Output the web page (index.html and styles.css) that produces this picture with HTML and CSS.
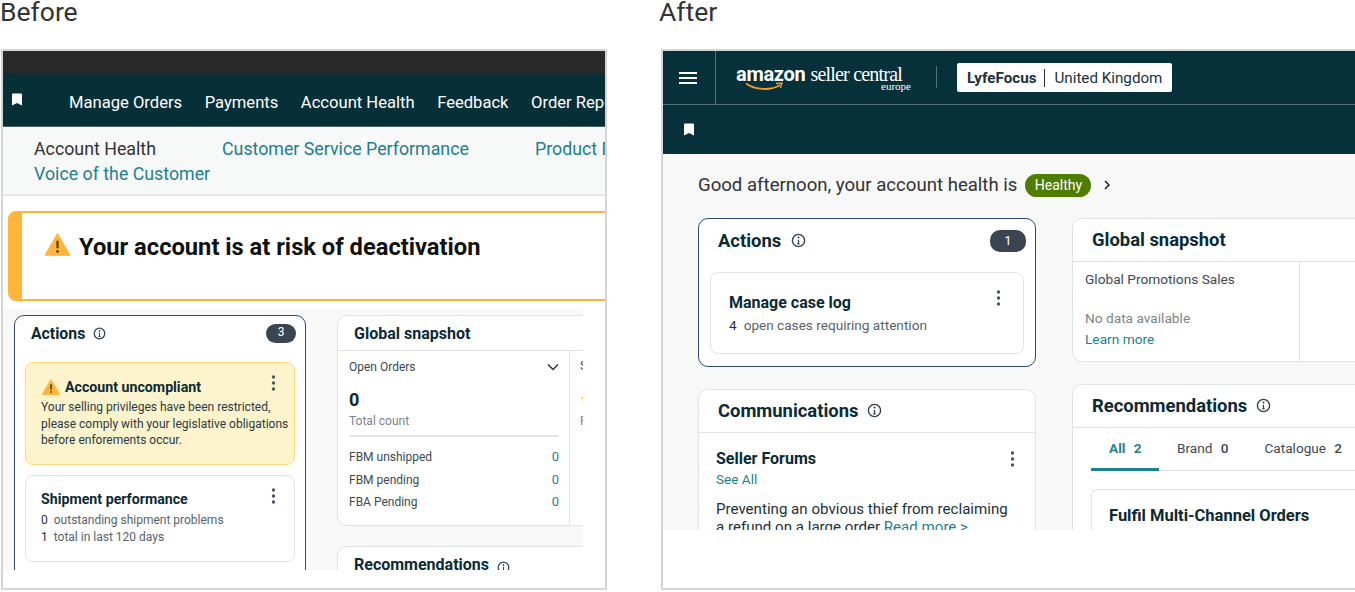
FILE: index.html
```html
<!DOCTYPE html>
<html lang="en">
<head>
    <meta charset="UTF-8">
    <title>Before and After</title>
    <link rel="stylesheet" href="styles.css">
</head>
<body>
<svg class="sprites" width="0" height="0">
    <symbol id="bookmark" viewBox="0 0 10 12"><path d="M0 1a1 1 0 0 1 1-1h8a1 1 0 0 1 1 1v11L5 9.500 0 12z" fill="#fff"/></symbol>
    <symbol id="info" viewBox="0 0 14 14"><circle cx="7" cy="7" r="5.700" fill="none" stroke="#33414d" stroke-width="1.300"/><path d="M7 6.200v4M5.900 10.200h2.200" fill="none" stroke="#33414d" stroke-width="1.200"/><circle cx="7" cy="4.200" r=".9" fill="#33414d"/></symbol>
    <symbol id="kebab" viewBox="0 0 4 16"><circle cx="2" cy="2" r="1.700" fill="#4a5560"/><circle cx="2" cy="8" r="1.700" fill="#4a5560"/><circle cx="2" cy="14" r="1.700" fill="#4a5560"/></symbol>
    <symbol id="warn" viewBox="0 0 20 18"><path d="M10 .5 19.800 17.500H.2z" fill="#ffb43c" stroke="#ffb43c" stroke-linejoin="round"/><path d="M10 6v6" stroke="#5a3b00" stroke-width="1.800"/><circle cx="10" cy="14.500" r="1.100" fill="#5a3b00"/></symbol>
</svg>

<div class="compare">
    <section class="side side-before">
        <h2 class="side-label">Before</h2>
        <div class="frame">
            <div class="shot">
                <div class="blackbar"></div>
                <nav class="old-nav">
                    <svg class="bookmark"><use href="#bookmark"/></svg>
                    <div class="old-nav-links">
                        <span>Manage Orders</span>
                        <span>Payments</span>
                        <span>Account Health</span>
                        <span>Feedback</span>
                        <span>Order Reports</span>
                    </div>
                </nav>
                <div class="subnav">
                    <span class="subnav-current">Account Health</span>
                    <a>Customer Service Performance</a>
                    <a>Product Policy Compliance</a>
                    <a>Voice of the Customer</a>
                </div>
                <div class="risk">
                    <svg class="risk-icon"><use href="#warn"/></svg>
                    <span>Your account is at risk of deactivation</span>
                </div>
                <div class="old-body">
                    <div class="card old-actions">
                        <div class="old-actions-head">
                            <h3>Actions</h3>
                            <svg class="info"><use href="#info"/></svg>
                            <span class="badge old-badge">3</span>
                        </div>
                        <div class="task task-warn">
                            <svg class="kebab"><use href="#kebab"/></svg>
                            <h4><svg class="task-warn-icon"><use href="#warn"/></svg>Account uncompliant</h4>
                            <p>Your selling privileges have been restricted, please comply with your legislative obligations before enforements occur.</p>
                        </div>
                        <div class="task task-ship">
                            <svg class="kebab"><use href="#kebab"/></svg>
                            <h4>Shipment performance</h4>
                            <div class="stat"><b>0</b>outstanding shipment problems</div>
                            <div class="stat"><b>1</b>total in last 120 days</div>
                        </div>
                    </div>
                    <div class="old-right">
                        <div class="card old-snapshot">
                            <h3 class="old-card-head">Global snapshot</h3>
                            <div class="old-cells">
                                <div class="orders">
                                    <div class="orders-top">
                                        <span>Open Orders</span>
                                        <svg class="chev" viewBox="0 0 12 8"><path d="M1 1.500 6 6.500 11 1.500" fill="none" stroke="#333" stroke-width="1.500"/></svg>
                                    </div>
                                    <div class="orders-num">0</div>
                                    <div class="orders-total">Total count</div>
                                    <div class="orders-row"><span>FBM unshipped</span><a>0</a></div>
                                    <div class="orders-row"><span>FBM pending</span><a>0</a></div>
                                    <div class="orders-row"><span>FBA Pending</span><a>0</a></div>
                                </div>
                                <div class="orders-next">
                                    <div class="orders-next-top">Seller Feedback</div>
                                    <div class="orders-next-star">★★★★★</div>
                                    <div class="orders-next-sub">Past year</div>
                                </div>
                            </div>
                        </div>
                        <div class="card old-reco">
                            <h3>Recommendations</h3>
                            <svg class="info"><use href="#info"/></svg>
                        </div>
                    </div>
                </div>
            </div>
        </div>
    </section>

    <section class="side side-after">
        <h2 class="side-label">After</h2>
        <div class="frame">
            <div class="shot shot-after">
                <header class="new-top">
                    <div class="burger"><i></i><i></i><i></i></div>
                    <div class="logo">
                        <span class="logo-amazon">amazon</span><span class="logo-seller">seller central</span>
                        <span class="logo-europe">europe</span>
                        <svg class="logo-smile" viewBox="0 0 38 10"><path d="M1 1.500C10 8 26 9 35 3" fill="none" stroke="#f39c2b" stroke-width="1.800"/><path d="M31 1.500 37 1 35.500 6" fill="none" stroke="#f39c2b" stroke-width="1.400"/></svg>
                    </div>
                    <div class="account">
                        <b>LyfeFocus</b><span>United Kingdom</span>
                    </div>
                </header>
                <div class="new-bar"><svg class="bookmark"><use href="#bookmark"/></svg></div>
                <div class="new-body">
                    <div class="greet">
                        <span>Good afternoon, your account health is</span>
                        <span class="pill">Healthy</span>
                        <svg class="greet-chev" viewBox="0 0 8 12"><path d="M2 2 6 6 2 10" fill="none" stroke="#222" stroke-width="1.500"/></svg>
                    </div>
                    <div class="new-cols">
                        <div class="new-left">
                            <div class="card new-actions">
                                <div class="new-actions-head">
                                    <h3>Actions</h3>
                                    <svg class="info info-big"><use href="#info"/></svg>
                                    <span class="badge new-badge">1</span>
                                </div>
                                <div class="task task-case">
                                    <svg class="kebab"><use href="#kebab"/></svg>
                                    <h4>Manage case log</h4>
                                    <div class="stat"><b>4</b>open cases requiring attention</div>
                                </div>
                            </div>
                            <div class="card comms">
                                <div class="card-head">
                                    <h3>Communications</h3>
                                    <svg class="info info-big"><use href="#info"/></svg>
                                </div>
                                <div class="forum">
                                    <svg class="kebab"><use href="#kebab"/></svg>
                                    <h4>Seller Forums</h4>
                                    <a class="see-all">See All</a>
                                    <p>Preventing an obvious thief from reclaiming a refund on a large order <a>Read more &gt;</a></p>
                                </div>
                            </div>
                        </div>
                        <div class="new-right">
                            <div class="card new-snapshot">
                                <div class="card-head"><h3>Global snapshot</h3></div>
                                <div class="promo">
                                    <div class="promo-title">Global Promotions Sales</div>
                                    <div class="promo-none">No data available</div>
                                    <a>Learn more</a>
                                </div>
                            </div>
                            <div class="card new-reco">
                                <div class="card-head">
                                    <h3>Recommendations</h3>
                                    <svg class="info info-big"><use href="#info"/></svg>
                                </div>
                                <div class="tabs">
                                    <span class="tab tab-on">All <b>2</b></span>
                                    <span class="tab">Brand <b>0</b></span>
                                    <span class="tab">Catalogue <b>2</b></span>
                                </div>
                                <div class="reco-item"><h4>Fulfil Multi-Channel Orders</h4></div>
                            </div>
                        </div>
                    </div>
                </div>
            </div>
        </div>
    </section>
</div>
</body>
</html>
```

FILE: styles.css
```css
* {
  box-sizing: border-box;
}
body {
  margin: 0;
  height: 592px;
  overflow: hidden;
  background: #fff;
  color: #0f1111;
  font-family: "Roboto", "Liberation Sans", sans-serif;
}
h2, h3, h4, p {
  margin: 0;
}
a {
  color: #1f7f8c;
}
.sprites {
  display: block;
  height: 0;
}
.compare {
  display: flex;
  gap: 54px;
  padding-left: 1px;
}
.side-before {
  width: 606px;
  flex: none;
}
.side-after {
  width: 700px;
  flex: none;
}
.side-label {
  height: 49px;
  margin-left: -1px;
  font-size: 26.500px;
  line-height: 24px;
  font-weight: 400;
  color: #333;
}
.side-after .side-label {
  margin-left: -2px;
}
.frame {
  height: 541px;
  border: 2px solid #d6d4d4;
  overflow: hidden;
}
.side-after .frame {
  border-right: none;
}
.shot {
  height: 519px;
  overflow: hidden;
}
.shot-after {
  height: 479px;
}
.card {
  background: #fff;
  border: 1px solid #dfe3e3;
  border-radius: 10px;
}
.info {
  width: 13px;
  height: 13px;
  flex: none;
}
.info-big {
  width: 15px;
  height: 15px;
}
.kebab {
  position: absolute;
  width: 5px;
  height: 16px;
}
.badge {
  margin-left: auto;
  background: #3b4552;
  color: #fff;
  font-size: 13px;
  text-align: center;
  border-radius: 10px;
}
.bookmark {
  width: 10px;
  height: 13px;
  flex: none;
}
.stat {
  font-size: 12px;
  line-height: 17px;
  color: #56636b;
}
.stat b {
  font-weight: 400;
  color: #22313a;
  margin-right: 6px;
}

/* before */
.blackbar {
  height: 22px;
  background: #292929;
}
.old-nav {
  height: 54px;
  padding: 6px 0 0 9px;
  background: #062f38;
  color: #fff;
  display: flex;
  align-items: center;
  border-bottom: 1px solid #4b6168;
  white-space: nowrap;
  overflow: hidden;
}
.old-nav .bookmark {
  margin-top: -6px;
}
.old-nav-links {
  display: flex;
  gap: 22.500px;
  margin-left: 47px;
  font-size: 16.600px;
}
.subnav {
  height: 69px;
  padding: 9px 0 0 31px;
  background: #f7f8f8;
  border-bottom: 2px solid #e6e8e8;
  display: grid;
  grid-template-columns: 188px 313px 200px;
  grid-auto-rows: 25px;
  font-size: 17.800px;
  line-height: 25px;
  white-space: nowrap;
  overflow: hidden;
}
.subnav-current {
  color: #333;
}
.risk {
  height: 90px;
  margin: 15px 0 8px 5px;
  width: 620px;
  padding: 19px 0 0 24px;
  background: #fff;
  border: 2px solid #ffb43c;
  border-left-width: 14px;
  border-radius: 8px;
  display: flex;
  align-items: flex-start;
  gap: 9px;
  font-size: 23.700px;
  line-height: 30px;
  font-weight: 700;
  white-space: nowrap;
}
.risk-icon {
  width: 25px;
  height: 23px;
  flex: none;
  margin-top: 1px;
  margin-left: -1px;
}
.old-body {
  width: 580px;
  height: 270px;
  padding: 6px 0 0 11px;
  background: #f8f8f8;
  display: flex;
  gap: 31px;
  overflow: hidden;
}
.old-actions {
  width: 292px;
  height: 300px;
  flex: none;
  padding: 0 10px;
  border-color: #2f4a6b;
}
.old-actions-head {
  height: 35px;
  margin: 0 -1px 11px 0;
  padding-left: 6px;
  display: flex;
  align-items: center;
  gap: 8px;
}
.old-actions-head h3 {
  font-size: 15.800px;
}
.old-actions-head h3, .old-card-head, .old-reco h3 {
  font-weight: 700;
  color: #0b2a33;
}
.old-card-head, .old-reco h3 {
  font-size: 16px;
}
.old-badge {
  width: 30px;
  height: 19px;
  line-height: 17px;
  font-size: 12px;
}
.task {
  position: relative;
  border-radius: 8px;
  border: 1px solid #e1e4e4;
  background: #fff;
}
.task h4 {
  font-size: 14.200px;
  color: #0b2a33;
  font-weight: 700;
}
.task-warn {
  height: 103px;
  padding: 14px 2px 0 15px;
  background: #fdf3cd;
  border: 1.500px solid #ffd97a;
}
.task-warn h4 {
  display: flex;
  align-items: center;
  gap: 5px;
  height: 19px;
  margin-bottom: 3px;
}
.task-warn-icon {
  width: 18px;
  height: 16px;
  margin-left: 1px;
}
.task-warn p {
  font-size: 12px;
  line-height: 16.500px;
  color: #2a3a42;
}
.task-warn .kebab, .task-ship .kebab {
  right: 18px;
  top: 12px;
}
.task-ship {
  height: 87px;
  margin-top: 10px;
  padding: 15px 0 0 15px;
}
.task-ship h4 {
  margin-bottom: 5px;
}
.old-right {
  width: 300px;
  flex: none;
}
.old-snapshot {
  height: 211px;
  border-radius: 10px 0 0 10px;
  overflow: hidden;
}
.old-card-head {
  height: 35px;
  line-height: 35px;
  padding-left: 16px;
  border-bottom: 1px solid #dfe3e3;
}
.old-cells {
  display: flex;
  height: 175px;
}
.orders {
  width: 232px;
  flex: none;
  padding: 8px 10px 8px 11px;
  border-right: 1px solid #dfe3e3;
  font-size: 12px;
  color: #3d4a52;
}
.orders-top {
  display: flex;
  justify-content: space-between;
  align-items: center;
  height: 16px;
}
.chev {
  width: 12px;
  height: 8px;
}
.orders-num {
  margin-top: 14px;
  font-size: 18px;
  line-height: 21px;
  font-weight: 700;
  color: #0b2a33;
}
.orders-total {
  height: 27px;
  padding-top: 4px;
  color: #7a8489;
  border-bottom: 2px solid #e3e6e6;
  margin-bottom: 11px;
}
.orders-row {
  display: flex;
  justify-content: space-between;
  height: 22.500px;
  line-height: 18px;
}
.orders-row a {
  font-size: 13px;
}
.orders-next {
  flex: 1;
  padding: 8px 0 0 10px;
  font-size: 12px;
  color: #3d4a52;
  white-space: nowrap;
}
.orders-next-top {
  height: 16px;
}
.orders-next-star {
  margin-top: 14px;
  height: 21px;
  line-height: 21px;
  color: #f5a623;
}
.orders-next-sub {
  height: 27px;
  padding-top: 4px;
  color: #7a8489;
}
.old-reco {
  height: 80px;
  margin-top: 20px;
  padding: 8px 0 0 16px;
  display: flex;
  align-items: flex-start;
  gap: 8px;
}
.old-reco .info {
  margin-top: 6px;
}

/* after */
.new-top {
  height: 54px;
  background: #06303a;
  border-bottom: 1px solid #55707a;
  display: flex;
  align-items: center;
}
.burger {
  width: 53px;
  height: 100%;
  border-right: 1px solid #55707a;
  padding-left: 16px;
  display: flex;
  flex-direction: column;
  justify-content: center;
  gap: 3px;
}
.burger i {
  display: block;
  width: 18px;
  height: 2px;
  background: #fff;
}
.logo {
  position: relative;
  width: 241px;
  height: 100%;
  padding: 11px 0 0 20px;
  color: #fff;
  white-space: nowrap;
}
.logo-amazon {
  font-size: 20px;
  line-height: 24px;
  font-weight: 700;
  letter-spacing: -.3px;
}
.logo-seller {
  margin-left: 5px;
  font-family: "Liberation Serif", serif;
  font-size: 20px;
  letter-spacing: -.8px;
}
.logo-europe {
  position: absolute;
  left: 165px;
  top: 29px;
  font-family: "Liberation Serif", serif;
  font-size: 11px;
}
.logo-smile {
  position: absolute;
  left: 29px;
  top: 31px;
  width: 38px;
  height: 10px;
}
.account {
  height: 29px;
  width: 215px;
  padding: 0 10px;
  background: #fff;
  border-radius: 2px;
  display: flex;
  align-items: center;
  font-size: 15.200px;
  color: #22313a;
  white-space: nowrap;
  position: relative;
}
.account::before {
  content: "";
  position: absolute;
  left: -21px;
  top: 3px;
  height: 22px;
  width: 1px;
  background: #55707a;
}
.account b {
  padding-right: 8px;
  border-right: 1px solid #22313a;
  line-height: 18px;
}
.account span {
  padding-left: 9px;
}
.new-bar {
  height: 49px;
  background: #06303a;
  display: flex;
  align-items: center;
  padding: 0 0 0 21px;
}
.new-bar .bookmark {
  margin-top: -1px;
}
.new-body {
  height: 376px;
  padding: 19px 0 0 35px;
  background: #f8f8f8;
  overflow: hidden;
}
.greet {
  display: flex;
  align-items: center;
  height: 24px;
  font-size: 18.600px;
  color: #333;
}
.pill {
  margin-left: 8px;
  width: 66px;
  height: 23px;
  line-height: 23px;
  border-radius: 12px;
  background: #4e7d00;
  color: #fff;
  font-size: 14px;
  text-align: center;
}
.greet-chev {
  width: 8px;
  height: 12px;
  margin-left: 12px;
}
.new-cols {
  display: flex;
  gap: 36px;
  margin-top: 21px;
}
.new-left {
  width: 338px;
  flex: none;
}
.new-actions {
  height: 149px;
  padding: 0 11px;
  border-color: #2f4a6b;
}
.new-actions-head {
  height: 43px;
  margin: 0 -2px 10px 0;
  padding-left: 8px;
  display: flex;
  align-items: center;
  gap: 10px;
}
.new-actions-head h3, .card-head h3 {
  font-size: 18.400px;
  font-weight: 700;
  color: #0b2a33;
}
.new-badge {
  width: 36px;
  height: 22px;
  line-height: 22px;
}
.task-case {
  height: 82px;
  padding: 20px 0 0 18px;
}
.task-case h4 {
  font-size: 16px;
  margin-bottom: 5px;
}
.task-case .stat {
  font-size: 13.600px;
}
.task-case .stat b {
  margin-right: 7px;
}
.task-case .kebab {
  right: 22px;
  top: 17px;
}
.card-head {
  height: 43px;
  padding: 0 0 1px 19px;
  border-bottom: 1px solid #dfe3e3;
  display: flex;
  align-items: center;
  gap: 9px;
}
.comms {
  height: 300px;
  margin-top: 22px;
}
.forum {
  position: relative;
  padding: 16px 20px 0 17px;
}
.forum .kebab {
  right: 20px;
  top: 18px;
}
.forum h4 {
  font-size: 16px;
  line-height: 19px;
  color: #0b2a33;
}
.see-all {
  display: block;
  margin-top: 2px;
  font-size: 13.600px;
  line-height: 18px;
}
.forum p {
  margin-top: 12px;
  font-size: 15.100px;
  line-height: 18px;
  color: #22313a;
}
.new-right {
  width: 300px;
  flex: none;
}
.new-snapshot {
  height: 144px;
  width: 320px;
  border-radius: 10px 0 0 10px;
}
.promo {
  width: 227px;
  height: 100px;
  padding: 8px 12px;
  border-right: 1px solid #dfe3e3;
  font-size: 13.700px;
  line-height: 18px;
  color: #3d4a52;
}
.promo-none {
  margin-top: 21px;
  margin-bottom: 3px;
  color: #7a8489;
}
.new-reco {
  height: 300px;
  width: 320px;
  margin-top: 22px;
  border-radius: 10px 0 0 10px;
}
.tabs {
  height: 43px;
  margin-left: 18px;
  display: flex;
  border-bottom: 1px solid #dfe3e3;
  font-size: 13.600px;
  color: #3d4a52;
}
.tab {
  padding: 12px 18px 0 18px;
  white-space: nowrap;
}
.tab b {
  font-weight: 500;
  margin-left: 5px;
}
.tab-on {
  width: 68px;
  height: 43px;
  font-weight: 700;
  color: #1f7f8c;
  border-bottom: 3px solid #1f7f8c;
}
.tab-on b {
  font-weight: 700;
}
.reco-item {
  margin: 18px 0 0 18px;
  height: 100px;
  border: 1px solid #e1e4e4;
  border-right: none;
  border-radius: 6px 0 0 0;
  padding: 16px 0 0 17px;
}
.reco-item h4 {
  font-size: 16.500px;
  color: #0b2a33;
}
```
